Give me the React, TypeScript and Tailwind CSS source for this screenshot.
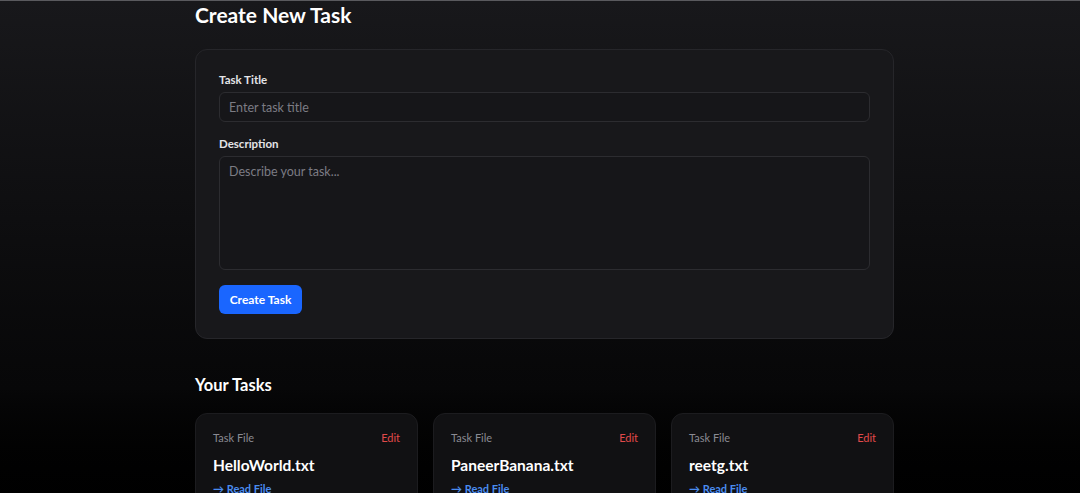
import { useState } from 'react'

const tasks = ['HelloWorld.txt', 'PaneerBanana.txt', 'reetg.txt']

export default function App() {
  const [title, setTitle] = useState('')
  const [desc, setDesc] = useState('')

  return (
    <div
      className="min-h-screen border-t border-[#5a5a5e] bg-gradient-to-b from-[#18181b] via-[#070708] via-70% to-black text-white"
      style={{ fontFamily: "Lato, 'Noto Sans', 'DejaVu Sans', sans-serif" }}
    >
      <main className="w-[699px] ml-[195px] pb-10">
        {/* Create */}
        <h1 className="text-[21px] font-bold leading-[28px]">Create New Task</h1>

        <div className="mt-[20px] rounded-xl border border-[#26262a] bg-[#18181b] px-[23px] pt-[22px] pb-[24px]">
          <label className="block text-[11.5px] font-bold text-[#e4e4e7] leading-[16px]">Task Title</label>
          <input
            value={title}
            onChange={e => setTitle(e.target.value)}
            placeholder="Enter task title"
            className="mt-[4px] block w-full h-[30px] rounded-md border border-[#2c2c30] bg-[#161619] px-[9px] text-[12.5px] text-white placeholder:text-[#7c7c84] outline-none"
          />

          <label className="block mt-[14px] text-[11.5px] font-bold text-[#e4e4e7] leading-[16px]">Description</label>
          <textarea
            value={desc}
            onChange={e => setDesc(e.target.value)}
            placeholder="Describe your task..."
            className="mt-[4px] block w-full h-[114px] resize-none rounded-md border border-[#2c2c30] bg-[#161619] px-[9px] py-[6px] text-[12.5px] text-white placeholder:text-[#7c7c84] outline-none"
          />

          <button className="mt-[15px] h-[29px] w-[83px] rounded-md bg-[#1a66ff] text-[12px] font-bold text-white">
            Create Task
          </button>
        </div>

        {/* List */}
        <h2 className="mt-[34px] text-[16.5px] font-bold leading-[24px]">Your Tasks</h2>

        <div className="mt-[16px] grid grid-cols-3 gap-[15px]">
          {tasks.map(t => (
            <div key={t} className="rounded-xl border border-[#1c1c1f] bg-[#111113] px-[17px] pt-[16px] pb-[16px]">
              <div className="flex items-center justify-between text-[11px] leading-[16px]">
                <span className="text-[#8a8a92]">Task File</span>
                <span className="text-[#e04a4a]">Edit</span>
              </div>
              <div className="mt-[9px] text-[15.5px] font-bold leading-[20px]">{t}</div>
              <div className="mt-[6px] text-[11px] font-bold leading-[16px] text-[#4a8cf0]">→ Read File</div>
            </div>
          ))}
        </div>
      </main>
    </div>
  )
}
